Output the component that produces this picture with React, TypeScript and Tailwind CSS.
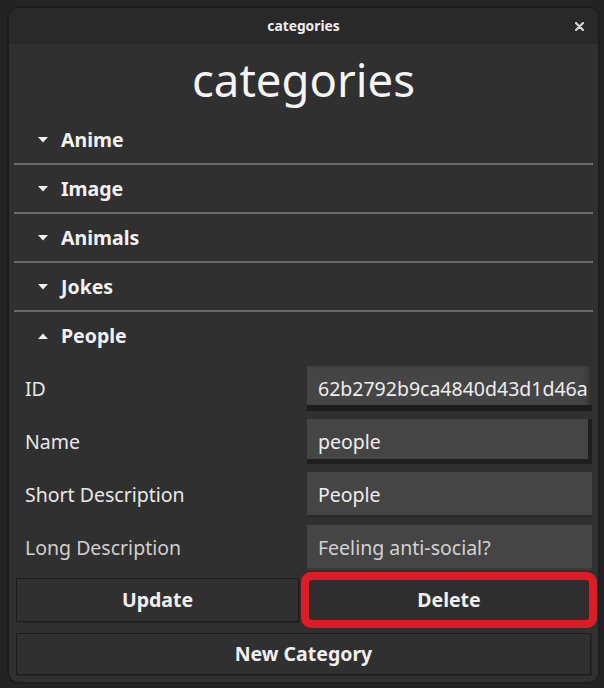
import React from "react";

const Caret = ({ up }: { up?: boolean }) => (
  <svg width="10" height="6" viewBox="0 0 10 6" className="shrink-0">
    {up ? <polygon points="0,6 10,6 5,0.5" fill="#f0f0f0" /> : <polygon points="0,0 10,0 5,5.5" fill="#f0f0f0" />}
  </svg>
);

const Row = ({ label, up, sep = true }: { label: string; up?: boolean; sep?: boolean }) => (
  <div className={sep ? "border-b-2 border-[#6a6a6a]" : ""}>
    <div className="h-[47px] flex items-center pl-[24px] gap-[13px]">
      <Caret up={up} />
      <span className="text-[19.5px] font-bold text-[#f2f2f2] leading-none">{label}</span>
    </div>
  </div>
);

const Field = ({ label, value, cls, dim }: { label: string; value: string; cls: string; dim?: boolean }) => (
  <div className="flex items-center h-[45px]">
    <div className={`w-[298px] pl-[16px] text-[19.5px] ${dim ? "text-[#cfcfcf]" : "text-[#e8e8e8]"}`}>{label}</div>
    <div className={`w-[285px] h-[45px] bg-[#454545] overflow-hidden flex items-center pl-[11px] ${cls}`}>
      <span className={`text-[19.5px] whitespace-nowrap ${dim ? "text-[#d2d2d2]" : "text-[#ededed]"}`}>{value}</span>
    </div>
  </div>
);

export default function App() {
  return (
    <div className="w-[604px] h-[688px] bg-[#232323] pt-[8px] pl-[9px] overflow-hidden font-['Noto_Sans',sans-serif]">
      <div className="w-[589px] h-[674px] rounded-[9px] bg-[#303030] overflow-hidden shadow-[0_0_3px_rgba(0,0,0,0.6)] flex flex-col">
        <div className="h-[36px] bg-[#292929] flex items-center justify-center relative shrink-0">
          <span className="text-[13.8px] font-bold text-[#eeeeee]">categories</span>
          <svg width="9" height="9" viewBox="0 0 9 9" className="absolute right-[14px] top-[14px]">
            <path d="M1 1 L8 8 M8 1 L1 8" stroke="#d4d4d4" strokeWidth="2.2" strokeLinecap="round" />
          </svg>
        </div>
        <div className="h-[72px] flex items-center justify-center shrink-0">
          <span className="text-[45.5px] text-[#f5f5f5] leading-none">categories</span>
        </div>
        <div className="px-[5px]">
          <Row label="Anime" />
          <Row label="Image" />
          <Row label="Animals" />
          <Row label="Jokes" />
          <Row label="People" up sep={false} />
        </div>
        <div className="pt-[7px] flex flex-col gap-[8px]">
          <Field label="ID" value="62b2792b9ca4840d43d1d46a" cls="shadow-[inset_0_-6px_0_#1c1c1c,inset_-6px_0_6px_-3px_#2a2a2a]" />
          <Field label="Name" value="people" cls="shadow-[inset_0_-5px_0_#1e1e1e,inset_-4px_0_0_#1e1e1e]" />
          <Field label="Short Description" value="People" cls="shadow-[inset_0_-2px_0_#2a2a2a]" />
          <Field label="Long Description" value="Feeling anti-social?" cls="shadow-[inset_0_-2px_0_#3a3a3a]" dim />
        </div>
        <div className="flex items-center pl-[7px] mt-[2px]">
          <button className="w-[283px] h-[44px] bg-[#303030] border border-[#1c1c1c] shadow-[1px_1px_0_#262626] text-[19.5px] font-bold text-[#f0f0f0]">
            Update
          </button>
          <div className="ml-[2px] w-[296px] h-[56px] rounded-[10px] bg-[#dd1c26] p-[8px]">
            <button className="w-full h-full rounded-[3px] bg-[#2e2e2e] text-[19.5px] font-bold text-[#f0f0f0]">
              Delete
            </button>
          </div>
        </div>
        <div className="pl-[7px] mt-[5px]">
          <button className="w-[575px] h-[42px] bg-[#303030] border border-[#1c1c1c] shadow-[1px_1px_0_#262626] text-[19.5px] font-bold text-[#f0f0f0]">
            New Category
          </button>
        </div>
      </div>
    </div>
  );
}
